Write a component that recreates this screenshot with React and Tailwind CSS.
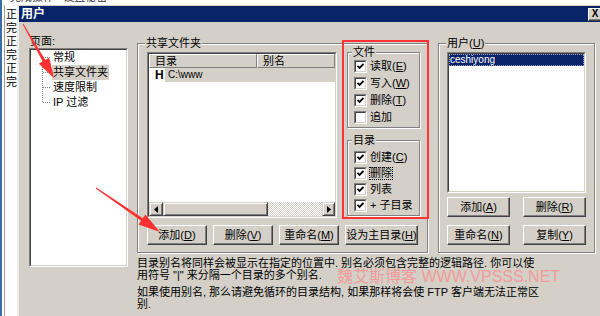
import React from 'react'

const raisedBtn = 'bg-[#d4d0c8] border border-t-white border-l-white border-r-[#404040] border-b-[#404040] shadow-[inset_-1px_-1px_0_#808080]'
const raisedBar = 'bg-[#d4d0c8] border border-t-[#d4d0c8] border-l-[#d4d0c8] border-r-[#404040] border-b-[#404040] shadow-[inset_1px_1px_0_#fff,inset_-1px_-1px_0_#808080]'

function Btn({ w, children }) {
  return (
    <div className={`${w} h-[20px] ${raisedBtn} flex items-center justify-center text-[11px] leading-none text-black`}>
      {children}
    </div>
  )
}

function Sunken({ className, children }) {
  return (
    <div className={`border border-t-[#808080] border-l-[#808080] border-r-white border-b-white ${className}`}>
      <div className="h-full border border-t-[#404040] border-l-[#404040] border-r-[#d4d0c8] border-b-[#d4d0c8] bg-white flex flex-col overflow-hidden">
        {children}
      </div>
    </div>
  )
}

function Group({ label, lm, className, children }) {
  return (
    <fieldset className={`border border-[#808080] shadow-[inset_1px_1px_0_#fff,1px_1px_0_#fff] min-w-0 ${className}`}>
      <legend className={`${lm} px-[1px] text-[11px] leading-[12px] bg-[#d4d0c8]`}>{label}</legend>
      {children}
    </fieldset>
  )
}

function Check({ on }) {
  return (
    <span className="w-[13px] h-[13px] shrink-0 border border-t-[#808080] border-l-[#808080] border-r-white border-b-white">
      <span className="w-full h-full flex items-center justify-center bg-white border border-t-[#404040] border-l-[#404040] border-r-[#d4d0c8] border-b-[#d4d0c8]">
        {on && (
          <svg width="7" height="7" viewBox="0 0 7 7">
            <path d="M0.5 2.8 L2.6 5 L6.5 1" stroke="#000" strokeWidth="1.8" fill="none" />
          </svg>
        )}
      </span>
    </span>
  )
}

function Perm({ on, h, focus, children }) {
  return (
    <div className={`${h} flex items-center pl-[6px] gap-[3px] text-[11px] leading-none`}>
      <Check on={on} />
      <span className={focus ? 'outline-1 outline-dotted outline-black' : ''}>{children}</span>
    </div>
  )
}

const U = ({ children }) => <span className="underline">{children}</span>

export default function App() {
  return (
    <div className="w-[600px] h-[316px] overflow-hidden relative flex bg-white text-black font-['Liberation_Sans','Noto_Sans_CJK_SC',sans-serif]">
      <div className="w-[2px] bg-[#3a6ea5] shrink-0" />
      <div className="flex-1 flex flex-col min-w-0">
        {/* window behind */}
        <div className="h-[5px] overflow-hidden pl-[8px] shrink-0">
          <div className="mt-[-9px] text-[11px] leading-[12px] whitespace-nowrap text-[#333]">完成操作&nbsp;&nbsp;&nbsp;设置秘密</div>
        </div>
        <div className="flex flex-1 min-h-0">
          <div className="w-[15px] shrink-0 flex overflow-hidden">
            <div className="w-[4px]" />
            <div className="border-l border-l-[#a0a0a0] pl-[1px] pt-[3px] text-[11px] leading-[13.5px] whitespace-nowrap">
              <div>正</div><div>完</div><div>正</div><div>完</div><div>正</div><div>完</div>
            </div>
          </div>

          {/* dialog */}
          <div className="flex-1 flex flex-col bg-[#d4d0c8] border-t border-l-2 border-t-[#d4d0c8] border-l-[#ecebe6] min-w-0">
            <div className="h-[16px] shrink-0 bg-[#0a246a] flex items-center justify-between pl-[2px]">
              <span className="text-white font-bold text-[12px] leading-none">用户</span>
              <div className={`w-[14px] h-[13px] mr-[-2px] ${raisedBtn} flex items-center justify-center text-[10px] font-bold leading-none`}>X</div>
            </div>

            <div className="flex-1 flex pl-[10px] gap-[9px]">
              {/* left pages */}
              <div className="w-[99px] pt-[12px] flex flex-col">
                <div className="h-[14px] text-[11px] leading-[14px] pl-[1px]">页面:</div>
                <Sunken className="h-[219px]">
                  <div className="flex">
                    <svg width="21" height="60" className="shrink-0">
                      <g stroke="#808080" strokeWidth="1" strokeDasharray="1 1">
                        <line x1="11.5" y1="7" x2="11.5" y2="53" />
                        <line x1="12" y1="7.5" x2="20" y2="7.5" />
                        <line x1="12" y1="22.5" x2="20" y2="22.5" />
                        <line x1="12" y1="37.5" x2="20" y2="37.5" />
                        <line x1="12" y1="52.5" x2="20" y2="52.5" />
                      </g>
                    </svg>
                    <div className="flex flex-col text-[11px] leading-[15px] whitespace-nowrap">
                      <div className="h-[15px] px-[1px]">常规</div>
                      <div className="h-[15px] px-[1px] bg-[#d4d0c8] self-start">共享文件夹</div>
                      <div className="h-[15px] px-[1px]">速度限制</div>
                      <div className="h-[15px] px-[1px]">IP 过滤</div>
                    </div>
                  </div>
                </Sunken>
              </div>

              {/* right column */}
              <div className="w-[458px] pt-[15px] flex flex-col">
                <div className="flex gap-[10px]">
                  <Group label="共享文件夹" lm="ml-[7px]" className="w-[291px]">
                    <div className="pl-[9px] pr-[7px] pb-[7px]">
                      <div className="flex items-start">
                        <Sunken className="mt-[3px] w-[190px] h-[166px]">
                          <div className="flex h-[14px] shrink-0 text-[11px] leading-none">
                            <div className="w-[108px] border border-t-white border-l-white border-r-[#808080] border-b-[#808080] bg-[#d4d0c8] flex items-center pl-[5px]">目录</div>
                            <div className="flex-1 border border-t-white border-l-white border-r-[#808080] border-b-[#808080] bg-[#d4d0c8] flex items-center pl-[5px]">别名</div>
                          </div>
                          <div className="flex h-[14px] items-stretch pl-[6px] shrink-0">
                            <div className="w-[10px] text-[12px] font-bold leading-[14px]">H</div>
                            <div className="flex-1 bg-[#d4d0c8] text-[10px] leading-[14px] pl-[3px]">C:\www</div>
                          </div>
                          <div className="flex-1" />
                          <div className="h-[14px] flex shrink-0">
                            <div className={`w-[14px] ${raisedBar} flex items-center justify-center`}>
                              <svg width="4" height="7" viewBox="0 0 4 7"><path d="M4 0 L0 3.5 L4 7Z" fill="#000" /></svg>
                            </div>
                            <div className={`w-[105px] ${raisedBar}`} />
                            <div className="flex-1 bg-[image:repeating-conic-gradient(#d4d0c8_0%_25%,#ffffff_0%_50%)] bg-[length:2px_2px]" />
                            <div className={`w-[13px] ${raisedBar} flex items-center justify-center`}>
                              <svg width="4" height="7" viewBox="0 0 4 7"><path d="M0 0 L4 3.5 L0 7Z" fill="#000" /></svg>
                            </div>
                          </div>
                        </Sunken>
                        <div className="ml-[10px] mt-[-3px] w-[73px] flex flex-col">
                          <Group label="文件" lm="ml-[4px]" className="">
                            <div className="pb-[1px]">
                              <Perm on h="h-[17px]">读取(<U>E</U>)</Perm>
                              <Perm on h="h-[17px]">写入(<U>W</U>)</Perm>
                              <Perm on h="h-[17px]">删除(<U>T</U>)</Perm>
                              <Perm h="h-[17px]">追加</Perm>
                            </div>
                          </Group>
                          <Group label="目录" lm="ml-[4px]" className="mt-[6px]">
                            <div className="pt-[3px] pb-[2px]">
                              <Perm on h="h-[16px]">创建(<U>C</U>)</Perm>
                              <Perm on h="h-[16px]" focus>删除</Perm>
                              <Perm on h="h-[16px]">列表</Perm>
                              <Perm on h="h-[16px]">+ 子目录</Perm>
                            </div>
                          </Group>
                        </div>
                      </div>
                      <div className="mt-[7px] flex gap-[6px]">
                        <Btn w="w-[60px]">添加(<U>D</U>)</Btn>
                        <Btn w="w-[60px]">删除(<U>V</U>)</Btn>
                        <Btn w="w-[60px]">重命名(<U>M</U>)</Btn>
                        <Btn w="w-[73px]">设为主目录(<U>H</U>)</Btn>
                      </div>
                    </div>
                  </Group>

                  <Group label={<>用户(<U>U</U>)</>} lm="ml-[7px]" className="w-[157px]">
                    <div className="px-[8px]">
                      <Sunken className="mt-[3px] h-[141px]">
                        <div className="h-[12px] bg-[#0a246a] text-white text-[10px] leading-[12px] pl-[1px] outline-1 outline-dotted outline-[#9aa6c8] -outline-offset-1">ceshiyong</div>
                      </Sunken>
                      <div className="mt-[4px] flex justify-between">
                        <Btn w="w-[63px]">添加(<U>A</U>)</Btn>
                        <Btn w="w-[63px]">删除(<U>R</U>)</Btn>
                      </div>
                      <div className="mt-[8px] flex justify-between">
                        <Btn w="w-[63px]">重命名(<U>N</U>)</Btn>
                        <Btn w="w-[63px]">复制(<U>Y</U>)</Btn>
                      </div>
                    </div>
                  </Group>
                </div>

                <div className="pt-[4px] text-[11px] leading-[12px] whitespace-nowrap">
                  <p>目录别名将同样会被显示在指定的位置中. 别名必须包含完整的逻辑路径. 你可以使</p>
                  <p>用符号 "|" 来分隔一个目录的多个别名.</p>
                  <p className="mt-[5px]">如果使用别名, 那么请避免循环的目录结构, 如果那样将会使 FTP 客户端无法正常区</p>
                  <p>别.</p>
                </div>
              </div>
            </div>
          </div>
        </div>
      </div>

      {/* annotations */}
      <div className="absolute left-[342px] top-[40px] w-[87px] h-[179px] border-2 border-[#ff3333]" />
      <div className="absolute left-[337px] top-[268px] text-[16px] leading-[18px] text-[#f29a9a] whitespace-nowrap">魏艾斯博客 WWW.VPSSS.NET</div>
      <svg className="absolute left-0 top-0 pointer-events-none" width="600" height="316">
        <polygon fill="#ff3030" points="22.6,24.2 42.7,61.4 38.8,63.7 54,78 49.2,57.7 45.3,60.0 23.4,23.8" />
        <polygon fill="#ff3030" points="95.7,188.4 141.1,220.7 138.5,224.4 160,232 145.3,214.6 142.8,218.3 96.3,187.6" />
      </svg>
    </div>
  )
}
